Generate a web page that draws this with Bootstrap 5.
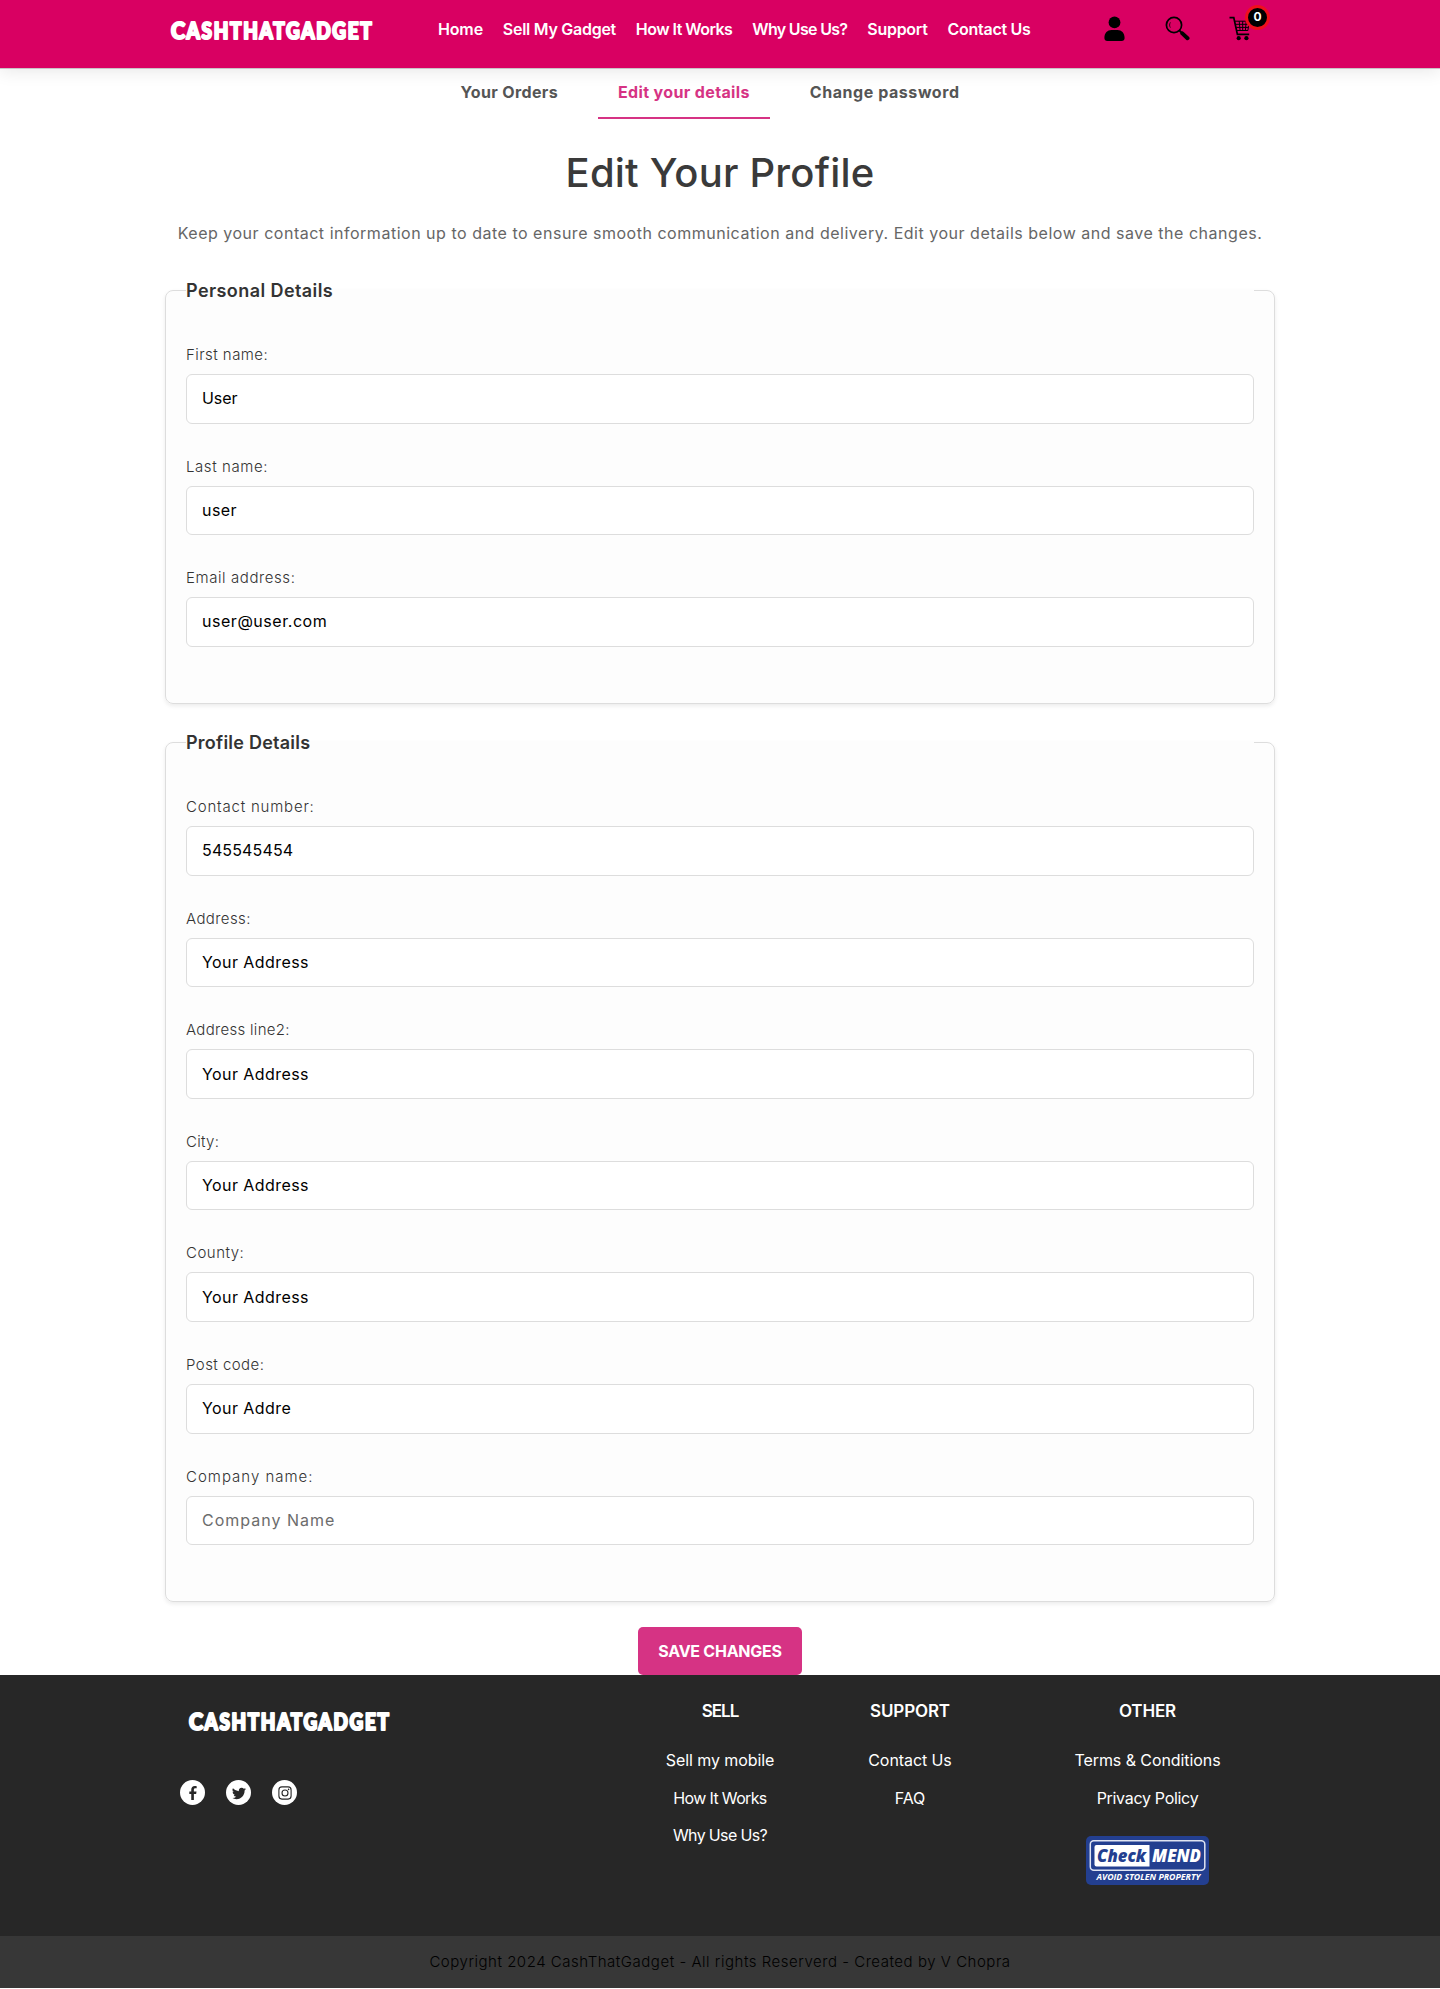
<!DOCTYPE html>
<html lang="en">
<head>
<meta charset="utf-8">
<meta name="viewport" content="width=device-width, initial-scale=1">
<title>CashThatGadget - Edit Your Profile</title>
<link rel="stylesheet" href="https://cdn.jsdelivr.net/npm/bootstrap@5.3.0/dist/css/bootstrap.min.css">
<style>
  body { font-family: Inter, "Open Sans", sans-serif; font-size: 16px; line-height: 24px; color: #000; background: #fff; }
  a { text-decoration: none; }
  .page-wrap { width: 1110px; margin: 0 auto; }

  .site-header { background: #d90062; height: 69px; border-bottom: 1px solid #c9c3c6; box-shadow: 0 3px 16px rgba(0,0,0,.09); }
  .brand-svg { display: block; width: 212px; height: 32px; }
  .brand-svg g { letter-spacing: 2px; }
  .site-header .brand-svg { margin: 15px 0 0 0; }
  .main-menu { margin: 17px 0 0 61px; gap: 19.9px; }
  .main-menu a { color: #fff; font-weight: 600; white-space: nowrap; letter-spacing: -.27px; }
  .main-menu li:nth-child(1) a { letter-spacing: -.15px; }
  .main-menu li:nth-child(3) a { letter-spacing: -.54px; }
  .main-menu li:nth-child(4) a { letter-spacing: -.68px; }
  .header-icons { margin: 15px 25px 0 auto; }
  .header-icons a { display: block; height: 27px; color: #000; }
  .header-icons svg { display: block; }
  .cart-count { position: absolute; left: 16px; top: -10px; width: 25px; height: 25px; border: 3px solid #f00f1c; border-radius: 50%; background: #000; color: #fff; font: 700 12px/18px Inter, sans-serif; text-align: center; }

  .account-tabs { gap: 20px; height: 50px; padding-right: 20px; }
  .account-tabs a { display: block; height: 50px; padding: 11px 20px 0; font-weight: 700; color: #555; letter-spacing: .36px; border-bottom: 2px solid transparent; }
  .account-tabs .is-current { color: #d63384; border-color: #d63384; }
  .account-tabs li:last-child a { letter-spacing: .56px; }

  .page-title { font-size: 40px; line-height: 48px; font-weight: 500; color: #3a3a3a; margin: 30px 0 24px; letter-spacing: .2px; }
  .page-intro { color: #666; letter-spacing: .515px; margin: 0 0 31.5px; white-space: nowrap; }

  .form-box { border: 1px solid #ddd; border-radius: 8px; background: #fdfdfd; padding: 0 20px 24px; margin: 0 0 24.8px; box-shadow: 0 2px 4px rgba(0,0,0,.08); }
  .form-box legend { float: none; width: 100%; height: 28px; padding: 0; margin: 0 0 39.5px; font-size: 18px; line-height: 28px; font-weight: 600; color: #333; letter-spacing: .42px; }
  .field { margin-bottom: 32px; }
  .field label { display: block; font-size: 15px; line-height: 22px; font-weight: 300; color: #333; margin-bottom: 8px; letter-spacing: .58px; }
  .field .form-control { height: 49.6px; padding: 0 15px 1px; font-size: 16px; font-weight: 375; color: #000; border: 1px solid #ddd; border-radius: 6px; background: #fff; letter-spacing: .42px; }
  .field .form-control::placeholder { color: #6c6c6c; letter-spacing: 1px; }
  .field .digits { letter-spacing: .15px; }
  .btn-save { width: 164px; height: 48px; padding: 0; border: 0; border-radius: 5px; background: #d63384; color: #fff; font-weight: 700; letter-spacing: -.25px; }

  .site-footer { background: #272727; height: 261px; }
  .footer-grid { display: grid; grid-template-columns: 445px 220px 160px 315px; }
  .footer-brand .brand-svg { margin: 31px 0 0 18px; }
  .social { margin: 42px 0 0 15px; gap: 21px; }
  .social a { width: 25px; height: 25px; border-radius: 50%; background: #fff; color: #272727; }
  .footer-col { padding-top: 24px; text-align: center; }
  .footer-col h6 { font-size: 17px; line-height: 24px; font-weight: 600; color: #fff; margin: 0 0 25px; letter-spacing: -.15px; }
  .footer-col .tight { letter-spacing: -1px; }
  .footer-col li { height: 37.7px; }
  .footer-col a { color: #fff; letter-spacing: -.08px; }
  .footer-col .snug { letter-spacing: -.65px; }
  .checkmend { display: block; margin: 12.5px auto 0; }
  .copyright-bar { background: #373737; height: 52px; line-height: 52px; font-size: 15px; font-weight: 300; letter-spacing: .525px; text-align: center; }
</style>
</head>
<body>

<header class="site-header">
  <div class="page-wrap d-flex align-items-start">
    <a href="#" aria-label="Home page">
      <svg class="brand-svg" viewBox="-4 -4 212 32"><g fill="#fff" stroke="#fff" stroke-width="2.2" stroke-linejoin="round" font-family="Lato, Inter, sans-serif" font-weight="900"><text x="2" y="20.3" font-size="23.500" textLength="16" lengthAdjust="spacingAndGlyphs">C</text><text x="17.500" y="20" font-size="22" textLength="187" lengthAdjust="spacingAndGlyphs">ASHTHATGADGET</text></g></svg>
    </a>
    <ul class="main-menu list-unstyled d-flex mb-0">
      <li><a href="#">Home</a></li>
      <li><a href="#">Sell My Gadget</a></li>
      <li><a href="#">How It Works</a></li>
      <li><a href="#">Why Use Us?</a></li>
      <li><a href="#">Support</a></li>
      <li><a href="#">Contact Us</a></li>
    </ul>
    <div class="header-icons d-flex">
      <a href="#" aria-label="Account" style="width:61px">
        <svg width="21" height="27" viewBox="0 0 21 27" fill="currentColor"><circle cx="10.500" cy="7.400" r="5.900"/><path d="M.4 23c0-5 3.200-7.900 7-7.900h6.200c3.800 0 7 2.900 7 7.900 0 1.900-1.100 2.900-3 2.900H3.400c-1.900 0-3-1-3-2.900z"/></svg>
      </a>
      <a href="#" aria-label="Search" style="width:64px">
        <svg width="25" height="27" viewBox="0 0 25 27"><circle cx="9" cy="10" r="7.600" fill="none" stroke="currentColor" stroke-width="1.700"/><path d="M14.300 15.400l2.200 2.200" stroke="currentColor" stroke-width="2"/><path d="M17.300 18.400l5.200 4.800" stroke="currentColor" stroke-width="4" stroke-linecap="round"/><path d="M5.400 7.400c-1.100 1.600-1.100 3.700 0 5.200" fill="none" stroke="currentColor" stroke-width=".8"/></svg>
      </a>
      <a href="#" class="position-relative" aria-label="Basket" style="width:21px">
        <svg width="21" height="27" viewBox="0 0 21 27" fill="none" stroke="currentColor"><path d="M.5 2.700h4.300l3.600 16.700h11.800" stroke-width="1.700"/><path d="M5.800 6.200h14.400l-1.300 9.300H7.700M6.500 9.300h13.300M7.200 12.400h12.200M10.200 6.200l.9 9.300M13.700 6.200v9.300M17.200 6.200l-.8 9.300" stroke-width="1"/><g fill="currentColor" stroke="none"><circle cx="9.700" cy="23.200" r="2.100"/><circle cx="17.400" cy="23.200" r="2.100"/></g></svg>
        <span class="cart-count">0</span>
      </a>
    </div>
  </div>
</header>

<main class="page-wrap">
  <ul class="account-tabs list-unstyled d-flex justify-content-center mb-0">
    <li><a href="#">Your Orders</a></li>
    <li><a href="#" class="is-current">Edit your details</a></li>
    <li><a href="#">Change password</a></li>
  </ul>

  <h1 class="page-title text-center">Edit Your Profile</h1>
  <p class="page-intro text-center">Keep your contact information up to date to ensure smooth communication and delivery. Edit your details below and save the changes.</p>

  <form>
    <fieldset class="form-box">
      <legend>Personal Details</legend>
      <div class="field"><label for="fn" style="letter-spacing:.45px">First name:</label><input id="fn" class="form-control" style="letter-spacing:-.1px" value="User"></div>
      <div class="field"><label for="ln">Last name:</label><input id="ln" class="form-control" value="user"></div>
      <div class="field"><label for="em">Email address:</label><input id="em" class="form-control" style="letter-spacing:.53px" value="user@user.com"></div>
    </fieldset>

    <fieldset class="form-box">
      <legend style="letter-spacing:.24px">Profile Details</legend>
      <div class="field"><label for="cn" style="letter-spacing:.8px">Contact number:</label><input id="cn" class="form-control digits" value="545545454"></div>
      <div class="field"><label for="a1" style="letter-spacing:.4px">Address:</label><input id="a1" class="form-control" value="Your Address"></div>
      <div class="field"><label for="a2" style="letter-spacing:.3px">Address line2:</label><input id="a2" class="form-control" value="Your Address"></div>
      <div class="field"><label for="ci" style="letter-spacing:.3px">City:</label><input id="ci" class="form-control" value="Your Address"></div>
      <div class="field"><label for="co" style="letter-spacing:.5px">County:</label><input id="co" class="form-control" value="Your Address"></div>
      <div class="field"><label for="pc" style="letter-spacing:.45px">Post code:</label><input id="pc" class="form-control" value="Your Addre"></div>
      <div class="field"><label for="cm" style="letter-spacing:1px">Company name:</label><input id="cm" class="form-control" placeholder="Company Name"></div>
    </fieldset>

    <div class="d-flex justify-content-center">
      <button type="button" class="btn btn-save">SAVE CHANGES</button>
    </div>
  </form>
</main>

<footer>
  <div class="site-footer">
    <div class="page-wrap footer-grid">
      <div class="footer-brand">
        <svg class="brand-svg" viewBox="-4 -4 212 32"><g fill="#fff" stroke="#fff" stroke-width="2.2" stroke-linejoin="round" font-family="Lato, Inter, sans-serif" font-weight="900"><text x="2" y="20.3" font-size="23.500" textLength="16" lengthAdjust="spacingAndGlyphs">C</text><text x="17.500" y="20" font-size="22" textLength="186" lengthAdjust="spacingAndGlyphs">ASHTHATGADGET</text></g></svg>
        <div class="social d-flex">
          <a href="#" class="d-flex align-items-center justify-content-center" aria-label="Facebook"><svg width="14" height="14" viewBox="0 0 16 16" fill="currentColor"><path d="M6 16V9H3.800V6.200H6V4.300C6 1.600 7.500 0 10.100 0c.9 0 1.700.1 2.100.2v2.500h-1.500C9.500 2.700 9 3.300 9 4.400v1.800h3L11.600 9H9v7z"/></svg></a>
          <a href="#" class="d-flex align-items-center justify-content-center" aria-label="Twitter"><svg width="14" height="14" viewBox="0 0 16 16" fill="currentColor"><path d="M5.026 15c6.038 0 9.341-5.003 9.341-9.334q.002-.211-.006-.422A6.700 6.700 0 0 0 16 3.542a6.700 6.700 0 0 1-1.889.518 3.300 3.300 0 0 0 1.447-1.817 6.500 6.500 0 0 1-2.087.793A3.286 3.286 0 0 0 7.875 6.030a9.320 9.320 0 0 1-6.767-3.429 3.290 3.290 0 0 0 1.018 4.382A3.300 3.300 0 0 1 .64 6.575v.045a3.290 3.290 0 0 0 2.632 3.218 3.200 3.200 0 0 1-.865.115 3 3 0 0 1-.614-.057 3.280 3.280 0 0 0 3.067 2.277A6.600 6.600 0 0 1 .78 13.580a6 6 0 0 1-.78-.045A9.340 9.340 0 0 0 5.026 15"/></svg></a>
          <a href="#" class="d-flex align-items-center justify-content-center" aria-label="Instagram"><svg width="14" height="14" viewBox="0 0 14 14" fill="none" stroke="currentColor" stroke-width="1.100"><rect x=".9" y=".9" width="12.200" height="12.200" rx="3"/><circle cx="7" cy="7" r="3"/><circle cx="10.600" cy="3.400" r=".8" fill="currentColor" stroke="none"/></svg></a>
        </div>
      </div>
      <div class="footer-col">
        <h6 class="tight">SELL</h6>
        <ul class="list-unstyled mb-0">
          <li><a href="#">Sell my mobile</a></li>
          <li><a href="#" class="snug">How It Works</a></li>
          <li><a href="#" class="snug">Why Use Us?</a></li>
        </ul>
      </div>
      <div class="footer-col">
        <h6>SUPPORT</h6>
        <ul class="list-unstyled mb-0">
          <li><a href="#">Contact Us</a></li>
          <li><a href="#">FAQ</a></li>
        </ul>
      </div>
      <div class="footer-col">
        <h6>OTHER</h6>
        <ul class="list-unstyled mb-0">
          <li><a href="#">Terms &amp; Conditions</a></li>
          <li><a href="#" style="letter-spacing:-.3px">Privacy Policy</a></li>
        </ul>
        <svg class="checkmend" width="123" height="49" viewBox="0 0 123 49" font-family="Open Sans, sans-serif" font-style="italic" font-weight="800">
          <rect width="123" height="49" rx="5" fill="#233f90"/>
          <rect x="4.300" y="4.800" width="114.500" height="29.400" rx="3.500" fill="none" stroke="#dfe4f2" stroke-width="1.500"/>
          <path d="M10.500 9H63.500V30.500H10.500a2 2 0 0 1-2-2V11a2 2 0 0 1 2-2z" fill="#fff"/>
          <text x="11" y="26" font-size="18" fill="#233f90" textLength="49" lengthAdjust="spacingAndGlyphs">Check</text>
          <text x="66" y="26" font-size="18" fill="#fff" textLength="49" lengthAdjust="spacingAndGlyphs">MEND</text>
          <text x="10.500" y="43.700" font-size="8.500" font-weight="700" fill="#fff" textLength="104" lengthAdjust="spacingAndGlyphs">AVOID STOLEN PROPERTY</text>
        </svg>
      </div>
    </div>
  </div>
  <div class="copyright-bar">Copyright 2024 CashThatGadget - All rights Reserverd - Created by V Chopra</div>
</footer>

<script src="https://cdn.jsdelivr.net/npm/bootstrap@5.3.0/dist/js/bootstrap.bundle.min.js"></script>
</body>
</html>
